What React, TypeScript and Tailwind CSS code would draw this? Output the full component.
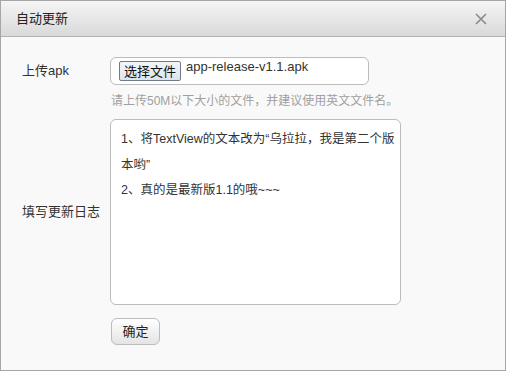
import React from 'react';

const font = { fontFamily: '"Liberation Sans", "Noto Sans CJK SC", sans-serif' };

const App: React.FC = () => {
  return (
    <div className="w-[508px] h-[372px] bg-white" style={font}>
      <div className="w-[506px] h-[371px] border border-[#a6a6a6] bg-[#f9f9f9] flex flex-col">
        <div className="h-[36px] shrink-0 flex items-center justify-between pl-[15px] pr-[18px] bg-gradient-to-b from-[#f5f5f5] to-[#d9d9d9] border-b border-[#b3b3b3]">
          <span className="text-[13px] text-[#222]">自动更新</span>
          <svg width="12" height="12" viewBox="0 0 12 12" className="text-[#8a8a8a]">
            <path d="M1 1 L11 11 M11 1 L1 11" stroke="currentColor" strokeWidth="1.6" />
          </svg>
        </div>

        <div className="flex flex-col pt-[20px] text-[13px] text-[#333]">
          <div className="flex items-center">
            <div className="w-[109px] pl-[21px] shrink-0">上传apk</div>
            <div className="w-[259px] h-[28px] rounded-[6px] border border-[#bcbcbc] bg-white flex items-start pl-[8px] pt-[3px] gap-[5px]">
              <span className="h-[20px] px-[4px] flex items-center border border-[#6f7b8a] rounded-[2px] bg-gradient-to-b from-[#f2f6fa] to-[#dce4ec] text-[13px] text-[#111] leading-none">选择文件</span>
              <span className="text-[13px] text-[#333] leading-[16px] -mt-[2px]">app-release-v1.1.apk</span>
            </div>
          </div>
          <div className="pl-[110px] mt-[7px] text-[12px] text-[#a0a0a0]">请上传50M以下大小的文件，并建议使用英文文件名。</div>

          <div className="flex items-center mt-[9px]">
            <div className="w-[109px] pl-[21px] shrink-0">填写更新日志</div>
            <div className="w-[291px] h-[186px] rounded-[6px] border border-[#bcbcbc] bg-white px-[10px] pt-[7px] leading-[25.5px] text-[12.5px] text-[#333] whitespace-nowrap">
              <div>1、将TextView的文本改为“乌拉拉，我是第二个版</div>
              <div>本哟”</div>
              <div>2、真的是最新版1.1的哦~~~</div>
            </div>
          </div>

          <div className="pl-[110px] mt-[13px]">
            <button className="w-[49px] h-[27px] rounded-[6px] border border-[#bcbcbc] bg-gradient-to-b from-[#ffffff] to-[#e4e4e4] text-[13px] text-[#222]">确定</button>
          </div>
        </div>
      </div>
    </div>
  );
};

export default App;
